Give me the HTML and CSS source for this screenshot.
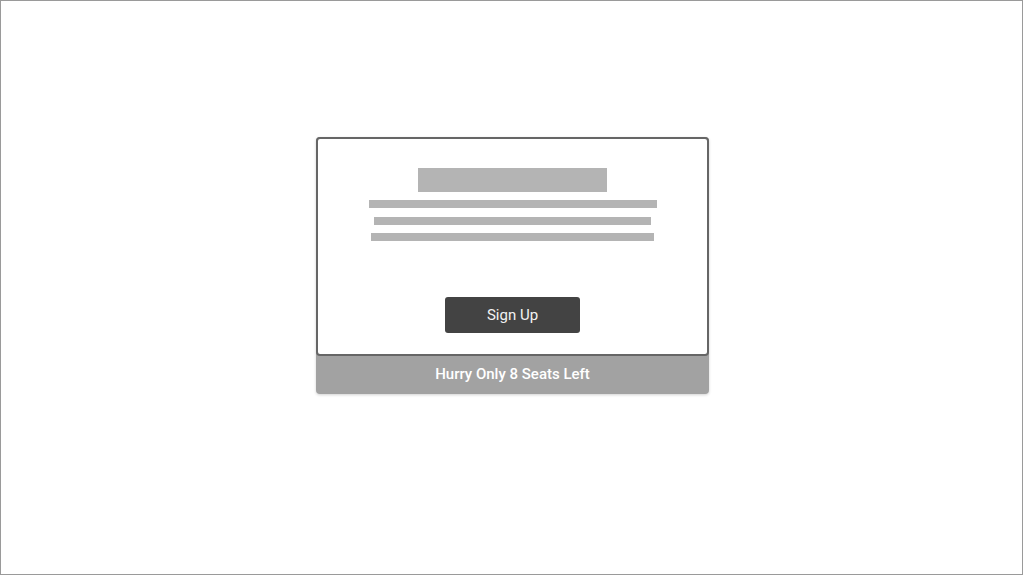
FILE: index.html
```html
<!DOCTYPE html>
<html lang="en">
<head>
  <meta charset="UTF-8">
  <meta name="viewport" content="width=device-width, initial-scale=1.0">
  <title>Seats Left</title>
  <link rel="stylesheet" href="styles.css">
</head>
<body>
  <div class="frame">
    <div class="card">
      <div class="panel">
        <div class="title-bar"></div>
        <div class="text-line line-1"></div>
        <div class="text-line line-2"></div>
        <div class="text-line line-3"></div>
        <button class="signup">Sign Up</button>
      </div>
      <div class="banner">Hurry Only 8 Seats Left</div>
    </div>
  </div>
</body>
</html>
```

FILE: styles.css
```css
body {
  margin: 0;
  font-family: Roboto, "Liberation Sans", sans-serif;
  background: #fff;
}
.frame {
  box-sizing: border-box;
  width: 1023px;
  height: 575px;
  border: 1px solid #9a9a9a;
  padding: 136px 0 0 2px;
}
.card {
  width: 393px;
  margin: 0 auto;
  border-radius: 4px;
  box-shadow: 0 1px 3px rgba(0,0,0,0.18);
  background: #a2a2a2;
}
.panel {
  box-sizing: border-box;
  height: 219px;
  background: #fff;
  border: 2px solid #666;
  border-radius: 4px;
  padding-top: 29px;
  display: flex;
  flex-direction: column;
  align-items: center;
}
.title-bar {
  width: 189px;
  height: 24px;
  background: #b4b4b4;
}
.text-line {
  height: 8px;
  background: #b4b4b4;
}
.line-1 {
  width: 288px;
  margin-top: 8px;
}
.line-2 {
  width: 277px;
  margin-top: 9px;
}
.line-3 {
  width: 283px;
  margin-top: 8px;
}
.signup {
  margin-top: 56px;
  width: 135px;
  height: 36px;
  border: none;
  border-radius: 3px;
  background: #434343;
  color: #f2f2f2;
  font-family: Roboto, "Liberation Sans", sans-serif;
  font-size: 15px;
  cursor: pointer;
}
.banner {
  height: 38px;
  line-height: 36px;
  text-align: center;
  color: #fff;
  font-size: 15px;
  font-weight: 500;
  border-radius: 0 0 4px 4px;
}
```
